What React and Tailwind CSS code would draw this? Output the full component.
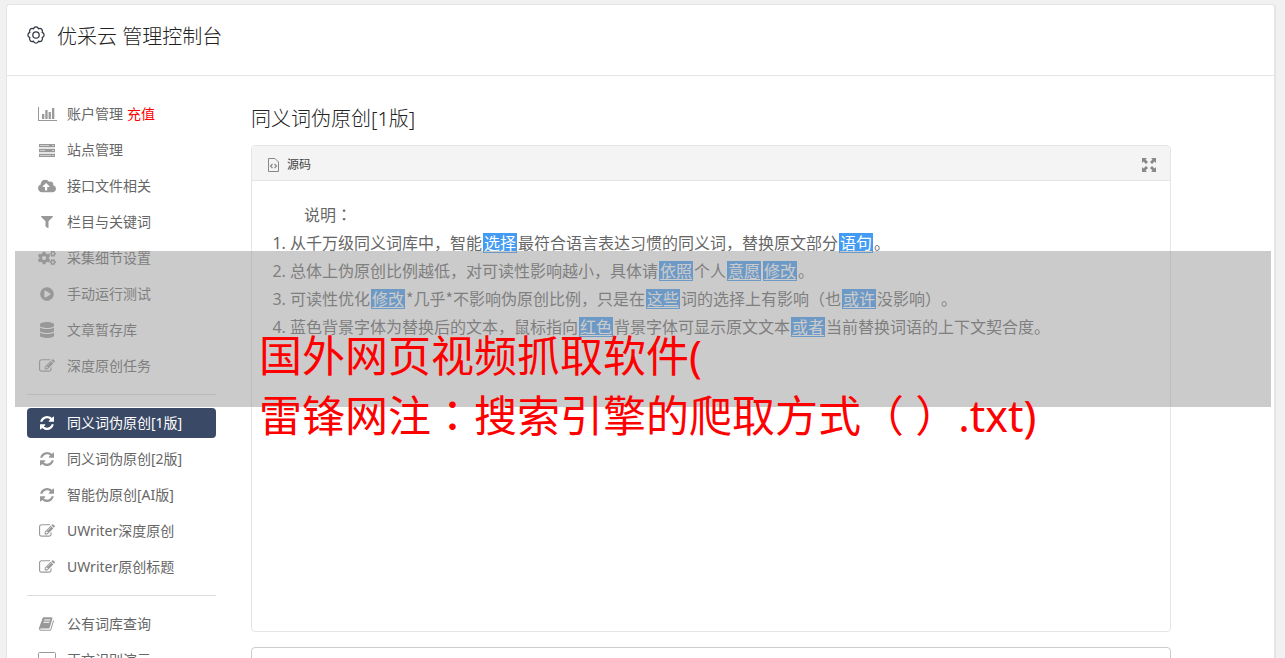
import React from 'react';
import { FaFilter, FaCogs, FaPlayCircle, FaDatabase, FaCloudUploadAlt } from 'react-icons/fa';

const GearIcon = () => (
    <svg className="w-[18px] h-[22px] text-[#2f3542]" viewBox="0 0 18 22" fill="none" stroke="currentColor" strokeWidth="1.25" strokeLinejoin="round">
        <path d="M6.470 2.900A2.600 2.600 0 0 1 11.530 2.900A2.600 2.600 0 0 1 15.100 6.470A2.600 2.600 0 0 1 15.100 11.530A2.600 2.600 0 0 1 11.530 15.100A2.600 2.600 0 0 1 6.470 15.100A2.600 2.600 0 0 1 2.900 11.530A2.600 2.600 0 0 1 2.900 6.470A2.600 2.600 0 0 1 6.470 2.900Z" />
        <circle cx="9" cy="9" r="3.2" />
    </svg>
);

const ChartIcon = () => (
    <svg className="w-[19px] h-[14px]" viewBox="0 0 19 14" fill="currentColor">
        <path d="M0 0h1v13h18v1H0zM4 7h2.300v5H4zM7.300 3h2.300v9H7.300zM10.600 5h2.300v7h-2.300zM14 1h2.300v11H14z" />
    </svg>
);

const ServerIcon = () => (
    <svg className="w-4 h-[13px]" viewBox="0 0 16 13">
        <path d="M0 0h16v3H0zM0 5h16v3H0zM0 10h16v3H0z" fill="currentColor" />
        <path d="M0 3h16v2H0zM0 8h16v2H0z" fill="currentColor" opacity=".25" />
        <path d="M1 1h9v1H1zM1 6h5v1H1zM1 11h11v1H1zM13 1h2v1h-2zM13 6h2v1h-2zM13 11h2v1h-2z" fill="#ccc" />
    </svg>
);

const EditIcon = () => (
    <svg className="w-4 h-[14px]" viewBox="0 0 1792 1536" fill="currentColor">
        <path d="M888 1056l116-116-152-152-116 116v56h96v96h56zM1328 336q-16-16-33 1l-350 350q-17 17-1 33t33-1l350-350q17-17 1-33zM1408 930v190q0 119-84.500 203.500T1120 1408H288q-119 0-203.500-84.500T0 1120V288Q0 169 84.500 84.500T288 0h832q63 0 117 25 15 7 18 23 3 17-9 29l-49 49q-14 14-32 8-23-6-45-6H288q-66 0-113 47t-47 113v832q0 66 47 113t113 47h832q66 0 113-47t47-113V994q0-13 9-22l64-64q15-15 35-7t20 29zM1312 192l288 288-672 672H640V864zM1756 324l-92 92-288-288 92-92q28-28 68-28t68 28l152 152q28 28 28 68t-28 68z" />
    </svg>
);

const RefreshIcon = () => (
    <svg className="w-[14px] h-[14px]" viewBox="0 0 1536 1536" fill="currentColor">
        <path d="M1511 928q0 5-1 7-64 268-268 434.500T764 1536q-146 0-282.500-55T238 1324l-129 129q-19 19-45 19t-45-19-19-45V960q0-26 19-45t45-19h448q26 0 45 19t19 45-19 45l-137 137q71 66 161 102t187 36q134 0 250-65t186-179q11-17 53-117 8-23 30-23h192q13 0 22.500 9.500t9.500 22.500zM1536 128v448q0 26-19 45t-45 19h-448q-26 0-45-19t-19-45 19-45l138-138Q969 256 768 256q-134 0-250 65T332 500q-11 17-53 117-8 23-30 23H50q-13 0-22.500-9.500T18 608v-7q65-268 270-434.500T768 0q146 0 284 55.500T1297 212l130-129q19-19 45-19t45 19 19 45z" />
    </svg>
);

const BookIcon = () => (
    <svg className="w-4 h-4" viewBox="0 0 1792 1792" fill="currentColor">
        <path d="M1639 478q40 57 18 129l-275 906q-19 64-76.500 107.500t-122.500 43.500h-923q-77 0-148.500-53.500t-99.500-131.500q-24-67-2-127 0-4 3-27t4-37q1-8-3-21.500t-3-19.500q2-11 8-21t16.500-23.500 16.500-23.500q23-38 45-91.500t30-91.500q3-10 .5-30t-.5-28q3-11 17-28t17-23q21-36 42-92t25-90q1-9-2.500-32t.5-28q4-13 22-30.500t22-22.500q19-26 42.500-84.500t27.500-96.500q1-8-3-25.500t-2-26.500q2-8 9-18t18-23 17-21q8-12 16.500-30.500t15-35 16-36 19.500-32 26.500-23.500 36-11.500 47.500 5.500l-1 3q38-9 51-9h761q74 0 114 56t18 130l-274 906q-36 119-71.500 153.500t-128.500 34.500h-869q-27 0-38 15-11 16-1 43 24 70 144 70h923q29 0 56-15.500t35-41.500l300-987q7-22 5-57 38 15 59 43zm-1064 2q-4 13 2 22.500t20 9.500h608q13 0 25.500-9.500t16.500-22.500l21-64q4-13-2-22.500t-20-9.500h-608q-13 0-25.500 9.500t-16.500 22.500zm-83 256q-4 13 2 22.500t20 9.500h608q13 0 25.500-9.500t16.500-22.500l21-64q4-13-2-22.500t-20-9.500h-608q-13 0-25.500 9.500t-16.500 22.500z" />
    </svg>
);

const ScreenIcon = () => (
    <svg className="w-[18px] h-4" viewBox="0 0 18 16" fill="none" stroke="currentColor">
        <rect x=".5" y=".5" width="17" height="11" rx="1" />
        <path d="M5 15.500h8M9 12v3" />
    </svg>
);

const CodeFileIcon = () => (
    <svg className="w-[11px] h-[14px] text-[#888]" viewBox="0 0 11 14" fill="none" stroke="currentColor">
        <path d="M.5 .5h6.500l3.500 3.500v9.500H.5z" />
        <path d="M4.500 6l-2 2 2 2M6.500 6l2 2-2 2" strokeWidth="1.200" />
    </svg>
);

const ExpandIcon = () => (
    <svg className="w-[14px] h-[14px]" viewBox="0 0 14 14" fill="currentColor">
        <path d="M0 0h5L3.500 1.500 6 4 4 6 1.500 3.500 0 5zM14 0v5l-1.500-1.500L10 6 8 4l2.500-2.500L9 0zM0 14V9l1.500 1.500L4 8l2 2-2.500 2.500L5 14zM14 14H9l1.500-1.500L8 10l2-2 2.500 2.500L14 9z" />
    </svg>
);

const groups = [
    [
        { icon: ChartIcon, label: '账户管理', extra: '充值' },
        { icon: ServerIcon, label: '站点管理' },
        { icon: FaCloudUploadAlt, label: '接口文件相关', size: 18 },
        { icon: FaFilter, label: '栏目与关键词', size: 12 },
        { icon: FaCogs, label: '采集细节设置', size: 18 },
        { icon: FaPlayCircle, label: '手动运行测试' },
        { icon: FaDatabase, label: '文章暂存库', size: 16 },
        { icon: EditIcon, label: '深度原创任务' },
    ],
    [
        { icon: RefreshIcon, label: '同义词伪原创[1版]', active: true },
        { icon: RefreshIcon, label: '同义词伪原创[2版]' },
        { icon: RefreshIcon, label: '智能伪原创[AI版]' },
        { icon: EditIcon, label: 'UWriter深度原创' },
        { icon: EditIcon, label: 'UWriter原创标题' },
    ],
    [
        { icon: BookIcon, label: '公有词库查询' },
        { icon: ScreenIcon, label: '正文识别演示' },
    ],
];

const NavItem = ({ item }) => {
    const Icon = item.icon;
    return (
        <a
            href="#"
            className={`flex items-center h-[30px] pl-2.5 rounded-sm text-sm ${item.active ? 'bg-[#3a4a66] text-white' : 'text-[#666]'}`}
        >
            <span className={`flex justify-center w-5 mr-2.5 ${item.active ? 'text-white' : 'text-[#999]'}`}>
                <Icon size={item.size || 14} />
            </span>
            {item.label}
            {item.extra && <span className="ml-1 text-[#f00]">{item.extra}</span>}
        </a>
    );
};

const Word = ({ children }) => (
    <a href="#" className="inline-block mx-px px-px leading-5 bg-[#439bf4] text-white underline underline-offset-2">{children}</a>
);

// Japanese face keeps the full-width colon centred in its cell
const Colon = () => <span className="leading-none font-['Noto_Sans_CJK_JP',sans-serif]">：</span>;

const App = () => (
    <div className="relative h-screen overflow-hidden bg-[#f1f1f1] pt-1 pl-1.5 pr-[9px] font-['Noto_Sans','Noto_Sans_CJK_SC',sans-serif] text-[#333] [text-spacing-trim:space-all]">
        <div className="min-h-full bg-white border border-r-2 border-[#e5e5e5] rounded-t">
            <header className="flex items-center gap-3 h-[71px] pl-5 pb-1.5 border-b border-[#e5e5e5]">
                <GearIcon />
                <h1 className="text-xl font-light text-[#222]">优采云 管理控制台</h1>
            </header>

            <div className="flex gap-[35px] pl-5 pr-5">
                <nav className="w-[189px] shrink-0 pt-[23px]">
                    {groups.map((items, i) => (
                        <div key={i} className={`flex flex-col gap-1.5 ${i > 0 ? 'mt-[13px] pt-[13px] border-t border-[#ddd]' : ''}`}>
                            {items.map(item => <NavItem key={item.label} item={item} />)}
                        </div>
                    ))}
                </nav>

                <main className="flex-1 max-w-[920px] pt-[29px]">
                    <h2 className="mb-3 text-xl leading-7 font-light text-[#222]">同义词伪原创[1版]</h2>
                    <section className="border border-[#e5e5e5] rounded">
                        <div className="flex items-center justify-between h-[35px] pt-1 pl-4 pr-3.5 bg-[#f4f4f4] border-b border-[#e5e5e5] rounded-t">
                            <div className="flex items-center gap-2 text-xs text-[#444]">
                                <CodeFileIcon />
                                源码
                            </div>
                            <button type="button" aria-label="全屏" className="text-[#888]">
                                <ExpandIcon />
                            </button>
                        </div>
                        <div className="min-h-[450px] pt-5 pl-[38px] pr-5 text-base leading-7 text-[#666]">
                            <p className="pl-3.5">说明<Colon /></p>
                            <ol className="list-decimal">
                                <li>从千万级同义词库中，智能<Word>选择</Word>最符合语言表达习惯的同义词，替换原文部分<Word>语句</Word>。</li>
                                <li>总体上伪原创比例越低，对可读性影响越小，具体请<Word>依照</Word>个人<Word>意愿</Word><Word>修改</Word>。</li>
                                <li>可读性优化<Word>修改</Word><span className="leading-none font-['Noto_Sans_CJK_SC',sans-serif]">*几乎*</span>不影响伪原创比例，只是在<Word>这些</Word>词的选择上有影响（也<Word>或许</Word>没影响）。</li>
                                <li>蓝色背景字体为替换后的文本，鼠标指向<Word>红色</Word>背景字体可显示原文文本<Word>或者</Word>当前替换词语的上下文契合度。</li>
                            </ol>
                        </div>
                    </section>
                    <section className="mt-[15px] h-20 border border-[#ccc] rounded"></section>
                </main>
            </div>
        </div>

        <div className="absolute top-[251px] left-[15px] right-[14px] h-[156px] pt-[75px] pl-[244px] bg-[#979797]/50 text-[43px] leading-[60px] text-[#f00] whitespace-nowrap">
            <p>国外网页视频抓取软件(</p>
            <p>雷锋网注<Colon />搜索引擎的爬取方式（ ）.txt)</p>
        </div>
    </div>
);

export default App;
